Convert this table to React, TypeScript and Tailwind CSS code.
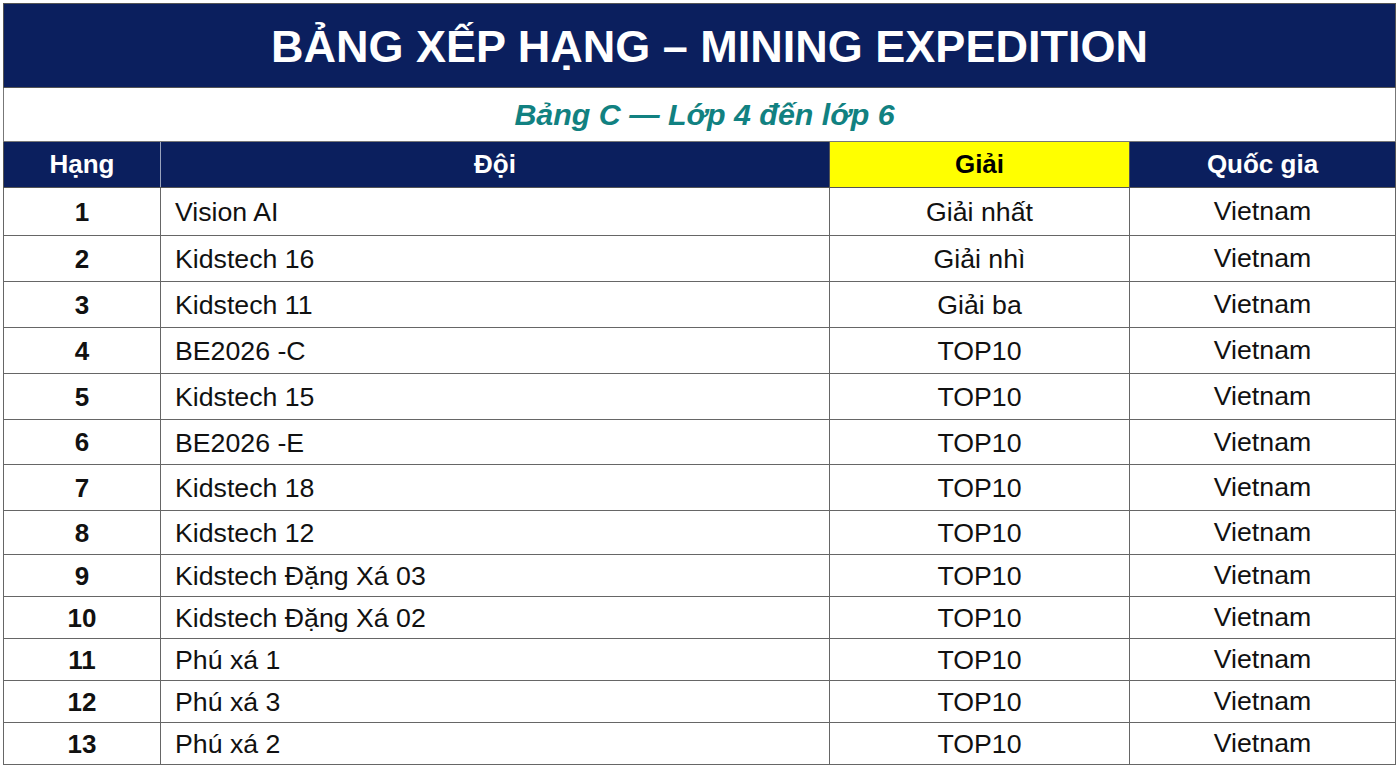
import React from 'react';

const rows = [
  { rank: 1, team: 'Vision AI', prize: 'Giải nhất', h: 48 },
  { rank: 2, team: 'Kidstech 16', prize: 'Giải nhì', h: 46 },
  { rank: 3, team: 'Kidstech 11', prize: 'Giải ba', h: 46 },
  { rank: 4, team: 'BE2026 -C', prize: 'TOP10', h: 46 },
  { rank: 5, team: 'Kidstech 15', prize: 'TOP10', h: 46 },
  { rank: 6, team: 'BE2026 -E', prize: 'TOP10', h: 45 },
  { rank: 7, team: 'Kidstech 18', prize: 'TOP10', h: 46 },
  { rank: 8, team: 'Kidstech 12', prize: 'TOP10', h: 44 },
  { rank: 9, team: 'Kidstech Đặng Xá 03', prize: 'TOP10', h: 42 },
  { rank: 10, team: 'Kidstech Đặng Xá 02', prize: 'TOP10', h: 42 },
  { rank: 11, team: 'Phú xá 1', prize: 'TOP10', h: 42 },
  { rank: 12, team: 'Phú xá 3', prize: 'TOP10', h: 42 },
  { rank: 13, team: 'Phú xá 2', prize: 'TOP10', h: 42 },
];

export default function App() {
  return (
    <div className="bg-white p-[3px] pr-[4px] w-[1400px] h-[768px] font-['Liberation_Sans',Arial,sans-serif] text-[#111]">
      <table className="w-full table-fixed border-collapse">
        <colgroup>
          <col className="w-[157px]" />
          <col className="w-[669px]" />
          <col className="w-[300px]" />
          <col />
        </colgroup>
        <thead>
          <tr className="h-[84px]">
            <th colSpan={4} className="bg-[#0b1f5e] border border-[#555] text-white text-[45px] font-bold pt-[3px] pl-[20px]">
              BẢNG XẾP HẠNG – MINING EXPEDITION
            </th>
          </tr>
          <tr className="h-[54px]">
            <th colSpan={4} className="bg-white border border-[#777] text-[#118181] text-[30.4px] font-bold italic pl-[10px]">
              Bảng C — Lớp 4 đến lớp 6
            </th>
          </tr>
          <tr className="h-[46px] text-[26px] font-bold">
            <th className="bg-[#0b1f5e] text-white border-y border-l border-[#555] border-r border-r-[#9aa3bd]">Hạng</th>
            <th className="bg-[#0b1f5e] text-white border border-[#555] border-l-[#9aa3bd]">Đội</th>
            <th className="bg-[#ffff00] text-black border border-[#555]">Giải</th>
            <th className="bg-[#0b1f5e] text-white border border-[#555]">Quốc gia</th>
          </tr>
        </thead>
        <tbody className="text-[26.7px] leading-[1.2]">
          {rows.map((r) => (
            <tr key={r.rank} style={{ height: r.h }}>
              <td className="border border-[#666] text-center font-bold text-[26px] pt-[2px]">{r.rank}</td>
              <td className="border border-[#666] pl-[14px] pt-[2px]">{r.team}</td>
              <td className="border border-[#666] text-center pt-[2px]">{r.prize}</td>
              <td className="border border-[#666] text-center">Vietnam</td>
            </tr>
          ))}
        </tbody>
      </table>
    </div>
  );
}
